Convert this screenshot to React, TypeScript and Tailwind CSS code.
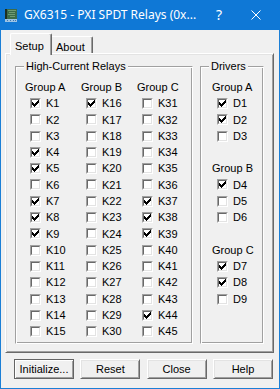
import { ReactNode } from "react";

const groupA = [true, false, false, true, true, false, true, true, true, false, false, false, false, false, false];
const groupB = [true, false, false, false, false, false, false, false, false, false, false, false, false, false, false];
const groupC = [false, false, false, false, false, false, true, true, true, false, false, false, false, true, false];

const drivers = [
  { name: "Group A", items: [["D1", true], ["D2", true], ["D3", false]] },
  { name: "Group B", items: [["D4", true], ["D5", false], ["D6", false]] },
  { name: "Group C", items: [["D7", true], ["D8", true], ["D9", false]] },
] as const;

// classic 7x7 check glyph, one rect per pixel run
function CheckGlyph() {
  return (
    <svg width="7" height="7" viewBox="0 0 7 7" shapeRendering="crispEdges" className="block">
      <path
        d="M6 0h1v1h-1z M5 1h2v1h-2z M0 2h1v1h-1z M4 2h3v1h-3z M0 3h2v1h-2z M3 3h3v1h-3z M0 4h5v1h-5z M1 5h3v1h-3z M2 6h1v1h-1z"
        fill="#000"
      />
    </svg>
  );
}

function Check({ label, checked }: { label: string; checked: boolean }) {
  return (
    <div className="flex items-center h-[16.3px]">
      <div className="ml-[5px] w-[11px] h-[11px] border border-t-[#a0a0a0] border-l-[#a0a0a0] border-r-white border-b-white">
        <div className="w-[9px] h-[9px] border border-t-[#696969] border-l-[#696969] border-r-[#e3e3e3] border-b-[#e3e3e3] bg-white">
          {checked && <CheckGlyph />}
        </div>
      </div>
      <span className="ml-[5px]">{label}</span>
    </div>
  );
}

function GroupLabel({ children }: { children: ReactNode }) {
  return <div className="flex items-center h-[16.3px]">{children}</div>;
}

function GroupBox({ title, className, children }: { title: string; className: string; children: ReactNode }) {
  return (
    <div
      className={
        "relative border border-t-[#a0a0a0] border-l-[#a0a0a0] border-r-white border-b-white shadow-[inset_1px_1px_0_#fff,inset_-1px_-1px_0_#a0a0a0] " +
        className
      }
    >
      <span className="absolute top-[-7px] left-[8px] px-[2px] leading-[13px] bg-[#f0f0f0]">{title}</span>
      {children}
    </div>
  );
}

function Button({ label, isDefault }: { label: string; isDefault?: boolean }) {
  return (
    <button
      className={
        "w-[60px] h-[20px] bg-[#f0f0f0] text-[11px] leading-none text-black " +
        (isDefault
          ? "border border-[#646464] shadow-[inset_1px_1px_0_#fff,inset_-1px_-1px_0_#a0a0a0]"
          : "border border-t-white border-l-white border-r-[#696969] border-b-[#696969] shadow-[inset_1px_1px_0_#e3e3e3,inset_-1px_-1px_0_#a0a0a0]")
      }
    >
      {label}
    </button>
  );
}

function AppIcon() {
  return (
    <svg width="14" height="15" viewBox="0 0 14 15" shapeRendering="crispEdges">
      <path d="M1 1h12v10H1z" fill="#3d6b48" />
      <path d="M1 1h2v10H1z" fill="#1d2f22" />
      <path d="M4 2h8v1H4z M5 4h6v1H5z M4 6h7v1H4z M6 8h5v1H6z" fill="#6f9a72" />
      <path d="M1 11h12v3H1z" fill="#9cc3e4" />
      <path d="M3 12h1v1H3z M6 12h1v1H6z M9 12h1v1H9z M11 12h1v1h-1z" fill="#3b77b3" />
    </svg>
  );
}

export default function App() {
  return (
    <div className="w-[280px] h-[389px] flex flex-col bg-[#f0f0f0] border-x border-b border-[#1b7fd6] font-['Liberation_Sans',Arial,sans-serif] text-[11px] text-black">
      {/* title bar */}
      <div className="h-[30px] -mx-px flex items-center bg-[#0f78d6] text-white">
        <div className="ml-[4px] mt-[1px]">
          <AppIcon />
        </div>
        <span className="ml-[6px] font-['Noto_Sans',sans-serif] text-[12px] leading-none">GX6315 - PXI SPDT Relays (0x...</span>
        <span className="ml-auto mr-[29px] font-['Noto_Sans',sans-serif] text-[14px] leading-none">?</span>
        <svg width="10" height="10" viewBox="0 0 10 10" className="mr-[19px]">
          <path d="M0.5 0.5L9.5 9.5M9.5 0.5L0.5 9.5" stroke="#fff" strokeWidth="1" />
        </svg>
      </div>

      {/* tabs */}
      <div className="h-[23px] flex items-end pl-[9px]">
        <div className="relative z-10 w-[42px] h-[22px] -mb-[2px] pt-[4px] pl-[4px] bg-[#f0f0f0] border-l border-t border-r border-l-white border-t-white border-r-[#696969] rounded-t-[2px] shadow-[inset_-1px_0_0_#a0a0a0]">
          Setup
        </div>
        <div className="w-[41px] h-[17px] pt-[2px] pl-[4px] border-t border-r border-t-white border-r-[#696969] rounded-tr-[2px] shadow-[inset_-1px_0_0_#a0a0a0]">
          About
        </div>
      </div>

      {/* tab page */}
      <div className="ml-[4px] w-[269px] h-[300px] flex gap-[7px] pt-[12px] pl-[9px] pr-[9px] pb-[8px] border border-t-white border-l-white border-r-[#696969] border-b-[#696969] shadow-[inset_1px_1px_0_#e3e3e3,inset_-1px_-1px_0_#a0a0a0]">
        <GroupBox title="High-Current Relays" className="w-[178px] h-[278px] pt-[12px] pl-[9px]">
          <div className="grid grid-cols-[56px_56px_56px]">
            {[
              { name: "Group A", start: 1, vals: groupA },
              { name: "Group B", start: 16, vals: groupB },
              { name: "Group C", start: 31, vals: groupC },
            ].map((col) => (
              <div key={col.name}>
                <GroupLabel>{col.name}</GroupLabel>
                {col.vals.map((v, i) => (
                  <Check key={i} label={"K" + (col.start + i)} checked={v} />
                ))}
              </div>
            ))}
          </div>
        </GroupBox>

        <GroupBox title="Drivers" className="w-[64px] h-[278px] pt-[12px] pl-[11px]">
          {drivers.map((g) => (
            <div key={g.name} className="mb-[16.3px]">
              <GroupLabel>{g.name}</GroupLabel>
              {g.items.map(([n, v]) => (
                <Check key={n} label={n} checked={v} />
              ))}
            </div>
          ))}
        </GroupBox>
      </div>

      {/* buttons */}
      <div className="mt-[6px] flex justify-between pl-[13px] pr-[6px]">
        <Button label="Initialize..." isDefault />
        <Button label="Reset" />
        <Button label="Close" />
        <Button label="Help" />
      </div>
    </div>
  );
}
